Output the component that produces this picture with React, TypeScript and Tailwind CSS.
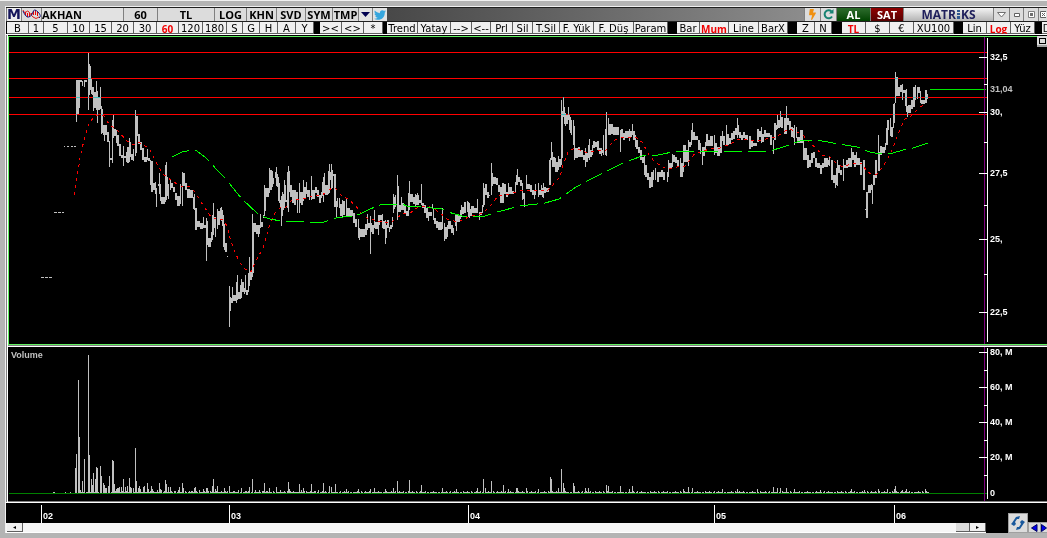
import React from 'react';
import { FaTwitter, FaBolt } from 'react-icons/fa';

// x, width, high, low of every price column
const PRICE_TEXT = `
41 3 277 278,45 3 277 278,49 3 277 278,54 3 212 213,58 3 212 213,62 2 212 213,64 1 146 147,67 2 146 147,71 2 146 147,74 2 146 147,
76 1 80 122,77 2 80 114,79 1 80 108,80 2 80 82,82 1 81 86,84 1 80 87,85 2 80 82,88 1 53 110,89 1 64 95,90 1 66 90,91 1 79 94,92 2 87 95,93 1 90 111,94 2 92 108,96 1 81 110,97 1 91 123,98 2 97 110,
100 1 87 109,101 1 106 134,102 1 109 133,103 4 125 135,104 1 125 141,107 2 132 142,109 1 141 167,110 2 158 160,112 1 120 163,113 1 115 138,114 2 129 136,116 1 130 143,117 2 135 146,119 2 144 156,121 2 155 158,123 1 146 166,
124 2 156 158,126 1 152 162,127 2 147 163,129 1 138 162,130 1 142 157,131 2 154 160,133 1 149 161,135 1 110 156,136 1 116 153,137 1 116 136,138 2 134 144,140 2 142 150,142 2 148 160,144 3 157 162,147 1 149 160,148 2 158 161,
150 1 160 185,151 2 161 192,153 2 183 190,155 1 182 194,156 1 188 207,158 1 184 186,159 1 173 194,160 1 184 201,161 4 197 204,165 1 165 202,166 1 162 200,167 1 177 196,168 1 184 199,170 1 180 190,171 2 183 188,173 2 187 192,175 2 193 200,
177 3 196 206,180 1 184 204,182 1 172 206,183 2 173 186,185 2 183 190,187 3 189 198,190 3 190 198,193 1 197 209,194 1 194 210,195 2 208 230,197 3 221 227,200 3 223 229,203 1 217 228,204 2 225 228,206 1 218 261,207 1 221 245,208 3 238 247,
211 1 232 242,212 1 215 240,213 1 203 235,214 2 217 228,215 1 217 237,217 1 209 229,218 2 211 225,220 1 208 220,221 1 207 221,222 1 210 226,223 1 215 247,224 1 224 250,225 2 243 252,227 1 256 257,
229 1 286 327,230 1 297 311,231 1 298 303,232 1 287 303,233 3 295 301,236 1 282 303,237 1 275 300,238 2 292 299,240 1 285 299,241 1 279 298,242 2 282 292,244 1 288 294,245 1 275 292,246 2 290 295,248 1 273 292,249 1 257 286,250 2 272 280,
252 1 214 277,253 1 223 273,254 2 223 232,256 4 225 234,258 1 225 237,260 1 214 228,261 2 222 227,263 1 215 218,264 1 185 216,265 1 188 211,266 3 188 197,269 1 168 193,270 2 170 190,272 1 171 187,273 1 178 184,275 1 172 178,276 1 167 186,
277 1 174 187,278 1 177 201,279 1 183 203,280 1 200 207,281 1 196 226,282 1 192 216,283 1 194 210,284 1 180 208,285 1 185 202,286 1 200 202,287 1 172 208,288 1 166 212,289 1 171 192,290 2 185 197,292 2 190 203,294 2 190 205,296 2 192 200,297 1 192 213,
299 1 183 213,300 1 192 203,301 2 192 205,303 1 180 201,304 2 187 199,306 1 182 194,307 2 190 197,309 1 190 200,311 1 176 200,312 3 190 199,315 2 187 193,317 2 190 197,319 2 195 203,321 1 192 198,322 1 182 196,323 1 177 202,324 1 173 193,325 3 185 195,
328 1 171 194,329 1 164 193,330 1 172 180,331 1 164 189,332 1 170 188,333 2 174 176,334 2 174 207,336 1 201 218,337 1 198 207,339 1 198 208,340 2 204 216,342 1 200 217,343 2 201 215,346 1 199 216,347 3 208 216,350 3 210 216,353 2 213 223,355 2 219 227,
358 1 219 238,359 1 228 240,360 5 229 237,365 2 224 235,367 1 214 230,368 2 223 228,370 1 216 254,371 1 223 232,372 2 225 234,374 1 210 228,375 3 222 229,378 1 215 235,379 1 215 225,380 2 215 220,382 1 214 228,383 2 221 229,385 1 220 244,386 1 225 238,387 2 220 228,
389 1 227 232,390 2 225 229,392 1 217 227,393 1 194 213,394 1 197 209,395 1 195 207,397 1 175 220,398 1 186 212,399 2 205 212,401 1 197 210,402 2 203 210,404 2 206 213,406 2 211 216,408 1 193 216,409 1 181 210,410 3 194 202,413 2 197 204,415 1 194 207,416 3 195 205,
417 1 193 204,419 2 200 203,421 1 184 205,422 2 203 208,424 2 205 213,426 2 208 218,428 1 212 221,429 3 212 216,432 1 204 209,433 1 208 220,434 2 218 224,436 2 221 228,438 4 222 230,442 1 208 229,444 1 223 241,445 2 227 239,447 1 225 237,448 3 221 229,451 2 225 233,453 1 228 235,
455 2 215 226,456 1 215 231,457 3 215 222,460 1 210 219,461 1 205 217,462 2 207 214,464 2 202 213,467 1 201 212,468 1 202 217,469 1 203 218,470 2 209 216,471 3 206 213,473 4 208 213,477 1 199 213,479 1 212 220,480 2 212 215,482 1 205 213,483 1 183 207,484 1 188 205,485 2 184 195,
487 2 192 198,489 1 195 196,491 1 163 195,492 1 173 186,493 3 177 184,496 2 178 185,498 2 185 192,500 2 187 203,502 2 183 203,504 2 184 194,506 2 192 197,508 1 183 195,509 3 187 194,512 2 191 194,515 1 182 192,516 1 175 185,517 1 169 185,518 2 177 182,520 2 180 186,
522 1 183 200,523 2 193 199,524 1 195 207,526 1 175 189,527 3 184 189,530 2 185 192,532 2 190 195,534 1 190 199,535 1 184 195,538 1 183 197,539 2 190 195,541 1 185 195,542 1 188 197,543 1 183 198,544 2 187 193,546 3 188 192,549 1 160 185,550 1 158 185,551 1 142 160,552 1 152 167,
553 2 157 167,555 3 162 172,555 1 158 170,558 1 156 170,559 2 159 167,561 1 100 165,562 1 111 158,563 1 97 117,564 1 107 124,565 1 113 126,566 2 115 124,568 1 107 120,569 1 115 130,570 1 117 133,571 1 120 135,573 1 120 145,574 1 126 160,575 3 148 158,578 2 147 157,580 3 150 157,
583 2 155 160,585 1 148 167,586 2 153 162,588 1 145 158,589 1 139 160,590 2 150 157,592 1 145 155,593 2 141 148,595 2 142 147,597 2 141 150,599 3 148 154,601 1 148 156,602 1 150 153,603 1 135 155,605 1 129 155,606 1 112 156,608 1 118 135,609 2 124 135,611 2 124 134,613 6 127 135,
620 1 130 152,621 2 129 138,623 2 133 140,625 4 131 138,629 1 129 141,630 2 131 137,632 1 124 135,633 2 131 140,635 1 135 147,636 2 140 149,638 2 147 153,640 2 150 160,642 2 157 163,644 1 155 175,645 2 165 177,647 2 173 180,649 2 177 188,651 2 172 187,653 1 170 180,655 1 168 180,
657 2 172 182,659 2 172 177,661 2 170 177,663 2 172 180,667 1 172 182,668 1 160 177,669 3 163 168,672 1 154 167,673 2 155 162,675 2 157 163,677 2 160 167,680 1 158 177,681 2 163 177,683 1 145 172,684 2 145 162,686 2 150 162,688 1 140 166,689 2 142 147,691 1 130 145,692 1 123 140,
693 2 132 140,695 3 136 140,698 2 140 150,700 1 143 154,702 1 147 165,703 2 147 156,705 1 142 152,706 2 134 146,708 2 140 146,710 3 136 146,714 1 135 155,715 2 143 153,717 3 147 156,720 1 136 153,721 1 136 153,722 1 131 141,723 2 136 145,726 1 125 145,727 2 134 145,
729 2 138 144,731 2 133 140,733 2 131 139,735 2 128 135,737 1 118 138,738 1 125 135,739 2 132 138,741 2 135 140,743 2 132 138,745 3 135 140,749 2 136 149,751 2 141 147,753 4 143 146,757 2 129 142,759 2 131 137,761 1 127 143,762 2 134 142,764 2 130 137,766 4 133 137,770 2 135 145,
773 1 140 154,774 2 123 140,776 1 125 130,777 1 115 129,778 2 120 128,780 1 111 127,781 2 117 128,784 2 118 134,786 1 106 134,787 2 118 125,789 2 121 130,791 2 127 137,793 1 128 138,794 1 125 145,796 1 127 138,797 3 137 143,800 3 130 143,803 1 140 160,804 3 148 160,
807 2 155 168,809 2 160 167,811 2 153 163,813 2 152 158,815 2 158 167,817 3 163 168,820 2 165 174,822 2 163 168,824 4 158 167,828 2 160 165,829 1 157 166,831 2 160 180,833 3 175 183,835 1 175 188,836 1 168 185,837 1 160 186,838 2 165 173,840 2 170 175,843 1 159 181,844 2 165 168,
846 2 160 168,848 3 158 167,851 1 148 167,852 2 152 160,854 2 155 167,856 1 152 165,857 3 158 165,860 2 162 175,863 2 160 190,866 2 192 218,865 1 209 210,868 3 185 193,871 1 184 190,872 1 185 204,873 2 175 185,875 2 160 178,878 1 135 171,879 1 152 171,880 2 146 155,882 3 147 153,
885 1 143 150,886 2 128 145,887 1 120 144,888 1 120 130,890 1 118 136,891 2 127 137,893 1 104 128,894 1 103 123,895 1 72 103,896 2 77 96,898 2 87 96,900 2 85 92,902 1 84 100,903 2 90 93,905 1 90 106,906 1 89 112,907 1 106 117,908 3 105 113,911 2 100 109,913 2 87 107,
915 1 85 100,917 1 87 99,918 2 87 93,920 1 91 103,921 4 100 104,925 2 90 103,927 1 94 99`;

const PRICE_BARS = PRICE_TEXT.split(',').map(row => row.trim().split(' ').map(Number));

const FAST_AVERAGE =
  '74,195 77,178 80,158 84,140 89,123 94,117 100,114 104,116 109,124 118,131 127,141 134,145 138,142 144,145 150,150 156,162 163,174 172,181 181,186 190,187 195,192 203,205 211,217 217,219 222,219 227,226 230,238 235,252 240,263 245,269 251,272 255,263 263,248 269,227 275,213 280,208 286,207 291,201 297,199 303,199 313,196 322,195 332,188 336,189 341,195 348,199 355,205 362,214 367,218 377,221 390,223 397,218 403,213 410,213 417,208 427,206 433,208 440,213 447,219 457,222 463,220 470,216 480,214 485,211 492,204 498,196 510,194 520,191 533,190 547,191 552,186 557,180 560,177 563,165 568,152 575,148 582,151 588,153 598,150 606,150 610,145 615,140 620,138 630,137 637,138 643,143 647,152 653,160 662,167 668,169 677,167 685,166 690,160 695,153 700,152 713,148 720,148 730,144 737,140 747,139 755,141 772,138 778,136 783,132 790,129 797,132 803,135 808,141 817,149 822,155 830,157 837,164 843,167 853,163 862,163 867,172 872,174 877,174 882,168 887,160 893,148 897,137 901,127 905,119 910,117 915,112 920,107 927,104';

const SLOW_AVERAGE =
  '172,157 182,152 192,150 197,151 205,157 218,171 225,178 237,193 243,200 257,213 264,217 270,219 281,221 300,221 305,222 324,222 330,220 336,218 343,217 353,216 360,214 370,209 383,204 402,204 407,206 422,207 442,209 448,212 462,216 485,216 497,212 520,206 545,203 559,199 576,187 593,178 617,166 623,163 642,156 648,155 658,155 677,151 710,152 743,151 770,151 783,147 800,141 817,140 833,143 857,147 870,152 880,154 893,153 903,150 913,148 928,143';

// hours whose volume stands out from the rest
const VOLUME_PEAKS: Record<number, number> = {
  75: 25, 76: 39, 78: 113, 79: 56, 80: 3, 82: 12, 84: 34, 88: 138, 89: 38, 91: 14, 92: 8, 93: 20, 95: 14, 96: 26, 97: 25,
  100: 27, 101: 17, 103: 10, 104: 8, 105: 5, 106: 5, 108: 7, 109: 17, 112: 33, 113: 32, 114: 9, 116: 4, 117: 5, 118: 5,
  119: 6, 121: 6, 123: 14, 125: 6, 127: 7, 129: 15, 130: 6, 131: 5, 133: 5, 135: 45, 136: 12, 138: 5, 139: 7, 140: 4, 143: 6,
  144: 7, 147: 10, 148: 4, 151: 7, 152: 4, 159: 10, 160: 4, 165: 13, 166: 9, 168: 6, 170: 6, 179: 6, 182: 10, 183: 5,
  194: 5, 195: 6, 203: 4, 206: 5, 207: 5, 212: 7, 213: 14, 215: 4, 217: 7, 224: 5, 229: 7, 241: 5, 249: 6, 252: 14,
  264: 10, 269: 5, 276: 6, 288: 11, 289: 4, 299: 9, 303: 5, 311: 9, 323: 10, 329: 7, 331: 6, 335: 9, 346: 4, 358: 4,
  370: 4, 374: 5, 385: 4, 393: 5, 397: 12, 409: 13, 421: 8, 442: 5, 456: 4, 477: 5, 483: 14, 485: 5, 491: 12, 503: 8,
  508: 4, 516: 5, 517: 5, 526: 5, 538: 4, 550: 16, 551: 14, 558: 5, 561: 24, 563: 10, 564: 5, 573: 10, 574: 7, 585: 5,
  588: 5, 606: 8, 608: 7, 620: 7, 629: 4, 632: 7, 683: 4, 688: 6, 692: 5, 722: 4, 737: 4, 757: 4, 773: 6, 777: 5,
  780: 5, 786: 5, 794: 4, 820: 3, 851: 4, 864: 3, 878: 4, 887: 4, 894: 4, 895: 7, 902: 3, 906: 4, 925: 4,
};

const VOLUME_BARS = Array.from({ length: 853 }, (_, i) => {
  const x = 76 + i;
  const base = (x * 7) % 11 < 2 ? 0 : (x * 13) % 17 < 4 ? 2 : 1;
  const early = x > 110 && x < 330 && (x * 5) % 7 < 2 ? 1 : 0;
  return { x, height: VOLUME_PEAKS[x] ?? (x < 112 ? base % 2 : base + early) };
});

const LEVELS = [52, 78, 97, 114];

const PRICE_TICKS = [
  { y: 57, label: '32,5' },
  { y: 112, label: '30,' },
  { y: 173, label: '27,5' },
  { y: 239, label: '25,' },
  { y: 312, label: '22,5' },
];

const VOLUME_TICKS = [
  { y: 352, label: '80, M' },
  { y: 387, label: '60, M' },
  { y: 422, label: '40, M' },
  { y: 457, label: '20, M' },
  { y: 493, label: '0' },
];

const MONTHS = [
  { x: 41, label: '02' },
  { x: 229, label: '03' },
  { x: 468, label: '04' },
  { x: 714, label: '05' },
  { x: 894, label: '06' },
];

const TOOLS = [
  [
    ['B', 'w-[22px]'], ['1', 'w-[15px]'], ['5', 'w-6'], ['10', 'w-[22px]'], ['15', 'w-[22px]'], ['20', 'w-[22px]'],
    ['30', 'w-[23px]'], ['60', 'w-[22px]'], ['120', 'w-6'], ['180', 'w-6'], ['S', 'w-4'], ['G', 'w-[17px]'],
    ['H', 'w-[18px]'], ['A', 'w-[18px]'], ['Y', 'w-[18px]'],
  ],
  [['><', 'w-[22px]'], ['<>', 'w-[22px]'], ['*', 'w-[19px]']],
  [
    ['Trend', 'w-[31px]'], ['Yatay', 'w-[33px]'], ['-->', 'w-[21px]'], ['<--', 'w-[19px]'], ['Prl', 'w-[22px]'],
    ['Sil', 'w-5'], ['T.Sil', 'w-[27px]'], ['F. Yük', 'w-[34px]'], ['F. Düş', 'w-10'], ['Param', 'w-[34px]'],
  ],
  [['Bar', 'w-[23px]'], ['Mum', 'w-[29px]'], ['Line', 'w-[30px]'], ['BarX', 'w-[29px]']],
  [['Z', 'w-[18px]'], ['N', 'w-[17px]']],
  [['TL', 'w-6'], ['$', 'w-6'], ['€', 'w-6'], ['XU100', 'w-10']],
  [['Lin', 'w-6'], ['Log', 'w-6'], ['Yüz', 'w-6']],
  [['D', 'w-[10px]']],
];

const GROUP_GAPS = ['mr-[6px]', 'mr-1', 'mr-[9px]', 'mr-[9px]', 'mr-[10px]', 'mr-[9px]', 'mr-[7px]', ''];

const ACTIVE = ['60', 'Mum', 'TL', 'Log'];

const HeaderButton = ({ label, width }: { label: string; width: string }) => (
  <button className={`${width} h-full shrink-0 bg-[#dcdcdc] text-center`}>{label}</button>
);

const Header = () => (
  <header className="flex h-[15px] gap-px pl-px border-y border-[#202020] bg-[#808080] text-[11px] leading-[13px] font-bold text-black overflow-hidden font-['Open_Sans',sans-serif]">
    <button className="w-[14px] shrink-0 bg-[#ececec] text-[14px] text-[#14145a] font-['DejaVu_Sans',sans-serif]">M</button>
    <button className="w-[19px] shrink-0 bg-[#dcdcdc]" aria-label="Indicators">
      <svg width="19" height="13" viewBox="0 0 19 13" fill="none">
        <path d="M9.500 5v2M11.500 3v4M13.500 2v5M15.500 4v4" stroke="#f00000" />
        <path d="M3.500 4v3M5.500 5v4M7.500 5v4" stroke="#f00000" />
        <path d="M1 2Q2 6 4 4T7 4T11 9T17 9" stroke="#e01818" />
        <path d="M1 3Q4 10 7 9T11 4T16 4T17 10" stroke="#181880" />
      </svg>
    </button>
    <input aria-label="Symbol" defaultValue="AKHAN" className="w-[81px] shrink-0 bg-[#e2e2e2] outline-none" />
    <HeaderButton label="60" width="w-[33px]" />
    <HeaderButton label="TL" width="w-[56px]" />
    <HeaderButton label="LOG" width="w-[31px]" />
    <HeaderButton label="KHN" width="w-[29px]" />
    <HeaderButton label="SVD" width="w-[28px]" />
    <HeaderButton label="SYM" width="w-[26px]" />
    <HeaderButton label="TMP" width="w-[25px]" />
    <button className="w-[13px] shrink-0 bg-[#e2e2e2] flex items-center justify-center" aria-label="More">
      <svg width="9" height="5" viewBox="0 0 9 5"><path d="M0 0H9L4.500 5Z" fill="#000050" /></svg>
    </button>
    <button className="w-[14px] shrink-0 bg-[#e2e2e2] flex items-center justify-center text-[#35a6de]" aria-label="Share">
      <FaTwitter size={12} />
    </button>
    <div className="flex-1 -ml-px bg-linear-to-r from-[#484848] to-[#8c8c8c]" />
    <button className="w-[15px] shrink-0 bg-[#dcdcdc] flex items-center justify-center text-[#f09010]" aria-label="Quick order">
      <FaBolt size={11} />
    </button>
    <button className="w-[15px] shrink-0 bg-[#dcdcdc] flex items-center justify-center" aria-label="Reload">
      <svg width="11" height="11" viewBox="0 0 11 11" fill="none">
        <path d="M8.500 2.500A4 4 0 1 0 9 7.500" stroke="#168272" strokeWidth="2" />
        <path d="M6 4.500H10.500V0Z" fill="#168272" />
      </svg>
    </button>
    <button className="w-[33px] shrink-0 bg-linear-to-b from-[#2c6c2c] to-[#004400] text-white">AL</button>
    <button className="w-[32px] shrink-0 bg-linear-to-b from-[#900000] to-[#580000] text-white">SAT</button>
    <div className="w-[89px] shrink-0 flex items-center justify-center bg-linear-to-b from-[#f4f4f4] to-[#b4b4b4] text-[12px] text-[#20205c]">
      MATR
      <svg className="mx-px" width="3" height="9" viewBox="0 0 3 9">
        <path d="M0 0h3v2H0zM0 3h3v2H0zM0 6h3v3H0z" fill="#305890" />
      </svg>
      KS
    </div>
    <button className="w-[15px] shrink-0 bg-[#dcdcdc] flex items-center justify-center" aria-label="Menu">
      <svg width="9" height="6" viewBox="0 0 9 6"><path d="M.5.5H8.500L4.500 5Z" fill="#fff" stroke="#707070" /></svg>
    </button>
    <button className="w-[13px] shrink-0 bg-[#dcdcdc] flex items-center justify-center" aria-label="Minimize">
      <svg width="6" height="4" viewBox="0 0 6 4"><path d="M.5.5h5v3h-5z" fill="#fff" stroke="#606060" /></svg>
    </button>
    <button className="w-[14px] shrink-0 bg-[#dcdcdc] flex items-center justify-center" aria-label="Maximize">
      <svg width="7" height="7" viewBox="0 0 7 7"><path d="M.5.5h6v6h-6z" fill="#fff" stroke="#808080" /><path d="M2 2h3v3H2z" fill="#707070" /></svg>
    </button>
    <button className="w-[8px] shrink-0 bg-[#dcdcdc] flex items-center justify-center" aria-label="Close">
      <svg width="6" height="7" viewBox="0 0 6 7"><path d="M.5.5h7v6h-7z" fill="#fff" stroke="#606060" /><path d="M2 2l3 3M5 2L2 5" stroke="#606060" /></svg>
    </button>
  </header>
);

const Toolbar = () => (
  <nav className="flex h-[13px] pl-px bg-black border-b border-white overflow-hidden text-[10px] leading-[12px] text-black font-['DejaVu_Sans',sans-serif]">
    {TOOLS.map((group, g) => (
      <div key={g} className={`flex shrink-0 ${GROUP_GAPS[g]}`}>
        {group.map(([label, width]) => (
          <button
            key={label}
            className={`${width} shrink-0 pt-px whitespace-nowrap bg-[#f0f0f0] border-r border-b border-[#606060] ${
              ACTIVE.includes(label) ? "text-[#f00000] font-bold font-['Open_Sans',sans-serif]" : ''
            }`}
          >
            <span className="flex justify-center">{label}</span>
          </button>
        ))}
      </div>
    ))}
  </nav>
);

const Axis = ({ ticks, minor, top, bottom, children }: {
  ticks: { y: number; label: string }[];
  minor: number[];
  top: number;
  bottom: number;
  children?: React.ReactNode;
}) => (
  <svg
    className="w-[68px] shrink-0 font-['Liberation_Sans',sans-serif]"
    height={bottom - top}
    viewBox={`979 ${top} 68 ${bottom - top}`}
    shapeRendering="crispEdges"
    fontSize="9"
    fontWeight="bold"
  >
    {children}
    <rect x="984" y={top} width="1" height={bottom - top} fill="#800080" />
    <rect x="987" y={top + 1} width="1" height={bottom - top - 3} fill="#fff" />
    {minor.map(y => <rect key={y} x="984" y={y} width="3" height="1" fill="#fff" />)}
    {ticks.map(({ y, label }) => (
      <g key={y} fill="#fff">
        {label !== '0' && <rect x="979" y={y} width="8" height="1" />}
        <text x="990" y={y + 3}>{label}</text>
      </g>
    ))}
  </svg>
);

const PricePanel = () => (
  <section className="relative flex border border-r-0 border-[#60f060] bg-black">
    <svg className="flex-1 min-w-0" height="307" viewBox="9 37 970 307" preserveAspectRatio="none" shapeRendering="crispEdges">
      {PRICE_BARS.map(([x, w, high, low], i) => (
        <rect key={i} x={x} y={high} width={w} height={low - high} fill="#c0c0c0" />
      ))}
      {LEVELS.map(y => (
        <rect key={y} className="mix-blend-difference" x="9" y={y} width="970" height="1" fill="#f00" />
      ))}
      <polyline points={FAST_AVERAGE} fill="none" stroke="#f00" strokeDasharray="3 4" />
      <polyline points={SLOW_AVERAGE} fill="none" stroke="#0f0" strokeDasharray="18 6" />
      <rect x="930" y="89" width="49" height="1" fill="#00e800" />
    </svg>
    <Axis ticks={PRICE_TICKS} minor={[84, 142, 205, 274]} top={37} bottom={344}>
      {LEVELS.map(y => <rect key={y} x="979" y={y} width="8" height="1" fill="#f00" />)}
      <rect x="979" y="89" width="7" height="1" fill="#00e800" />
      <text x="990" y="92" fill="#c0c0c0">31,04</text>
    </Axis>
    <button className="absolute right-0 -top-px w-[10px] h-[11px] bg-[#dcdcdc] border-b-2 border-[#a0a0a0] flex items-center justify-center" aria-label="Restore panel">
      <span className="w-[7px] h-[6px] border border-black" />
    </button>
  </section>
);

const VolumePanel = () => (
  <section className="relative flex bg-black border-b border-[#808080]">
    <svg className="flex-1 min-w-0" height="154" viewBox="8 347 971 154" preserveAspectRatio="none" shapeRendering="crispEdges">
      {VOLUME_BARS.map(({ x, height }) => (
        <rect key={x} x={x} y={493 - height} width="1" height={height} fill="#c0c0c0" />
      ))}
      <path d="M53 492h2M65 492h1M70 492h1" stroke="#c0c0c0" />
      <rect x="75" y="468" width="1" height="25" fill="#c0c0c0" />
      <rect x="9" y="493" width="970" height="1" fill="#008000" />
    </svg>
    <Axis ticks={VOLUME_TICKS} minor={[370, 405, 440, 475]} top={347} bottom={501}>
      <rect x="979" y="493" width="8" height="1" fill="#008000" />
    </Axis>
    <h2 className="absolute left-[3px] top-[3px] text-[9px] leading-[10px] font-bold text-[#c0c0c0] font-['Liberation_Sans',sans-serif]">Volume</h2>
  </section>
);

const TimeBar = () => (
  <footer className="flex bg-black">
    <div className="flex-1 min-w-0">
      <svg className="w-full font-['Liberation_Sans',sans-serif]" height="20" viewBox="6 503 980 20" shapeRendering="crispEdges" fontSize="9" fontWeight="bold" fill="#fff">
        {MONTHS.map(({ x, label }) => (
          <g key={label}>
            <rect x={x} y="505" width="1" height="18" />
            <text x={x + 2} y="519">{label}</text>
          </g>
        ))}
      </svg>
      <div className="flex h-[10px] pl-px bg-[#f6f6f6] border-b border-white">
        <button className="w-4 flex items-center justify-center bg-[#efefef] border-r border-b border-[#606060]" aria-label="Scroll left">
          <svg width="3" height="3" viewBox="0 0 3 3"><path d="M3 0V3L0 1.500Z" fill="#000" /></svg>
        </button>
        <div className="flex-1" />
        <button className="w-[14px] bg-[#dcdcdc] border-r border-b border-[#606060]" aria-label="Scroll thumb" />
        <button className="w-4 flex items-center justify-center bg-[#efefef] border-r border-b border-[#606060]" aria-label="Scroll right">
          <svg width="3" height="3" viewBox="0 0 3 3"><path d="M0 0V3L3 1.500Z" fill="#000" /></svg>
        </button>
      </div>
    </div>
    <div className="w-[61px] shrink-0 flex items-end justify-end overflow-hidden">
      <button className="w-5 h-5 shrink-0 bg-[#dcdcdc] border border-[#a0a0a0] flex items-center justify-center" aria-label="Refresh">
        <svg width="14" height="14" viewBox="0 0 14 14" fill="#18589c">
          <path d="M1 7L5 1L9 0L8 3L6 3L4 6L5 8L3 10L0 8Z" />
          <path d="M13 7L9 13L5 14L6 11L8 11L10 8L9 6L11 4L14 6Z" />
        </svg>
      </button>
      <button className="w-[13px] h-[11px] shrink-0 bg-[#dcdcdc] border border-[#a0a0a0] flex items-center justify-center" aria-label="Previous">
        <svg width="7" height="8" viewBox="0 0 7 8"><path d="M6 .5V7.500L.5 4Z" fill="#0000f0" stroke="#000060" /></svg>
      </button>
      <button className="w-[6px] h-[11px] shrink-0 bg-[#dcdcdc] border-y border-[#a0a0a0] flex items-center" aria-label="Next">
        <svg width="6" height="8" viewBox="0 0 6 8"><path d="M.5.5V7.500L5.500 4Z" fill="#0000f0" stroke="#000060" /></svg>
      </button>
    </div>
  </footer>
);

export default function App() {
  return (
    <main className="min-h-screen bg-[#b4b4b4] border-t border-[#f0f0f0] pt-[5px] pl-[5px] overflow-hidden">
      <div className="border-l border-t border-[#f0f0f0]">
        <Header />
        <Toolbar />
        <div className="border-l border-[#808080]">
          <div className="border-l border-white">
            <div className="h-px bg-black" />
            <PricePanel />
            <div className="h-[2px] border-t border-[#808080] bg-white" />
            <VolumePanel />
          </div>
        </div>
        <div className="border-t border-white">
          <TimeBar />
        </div>
      </div>
    </main>
  );
}
